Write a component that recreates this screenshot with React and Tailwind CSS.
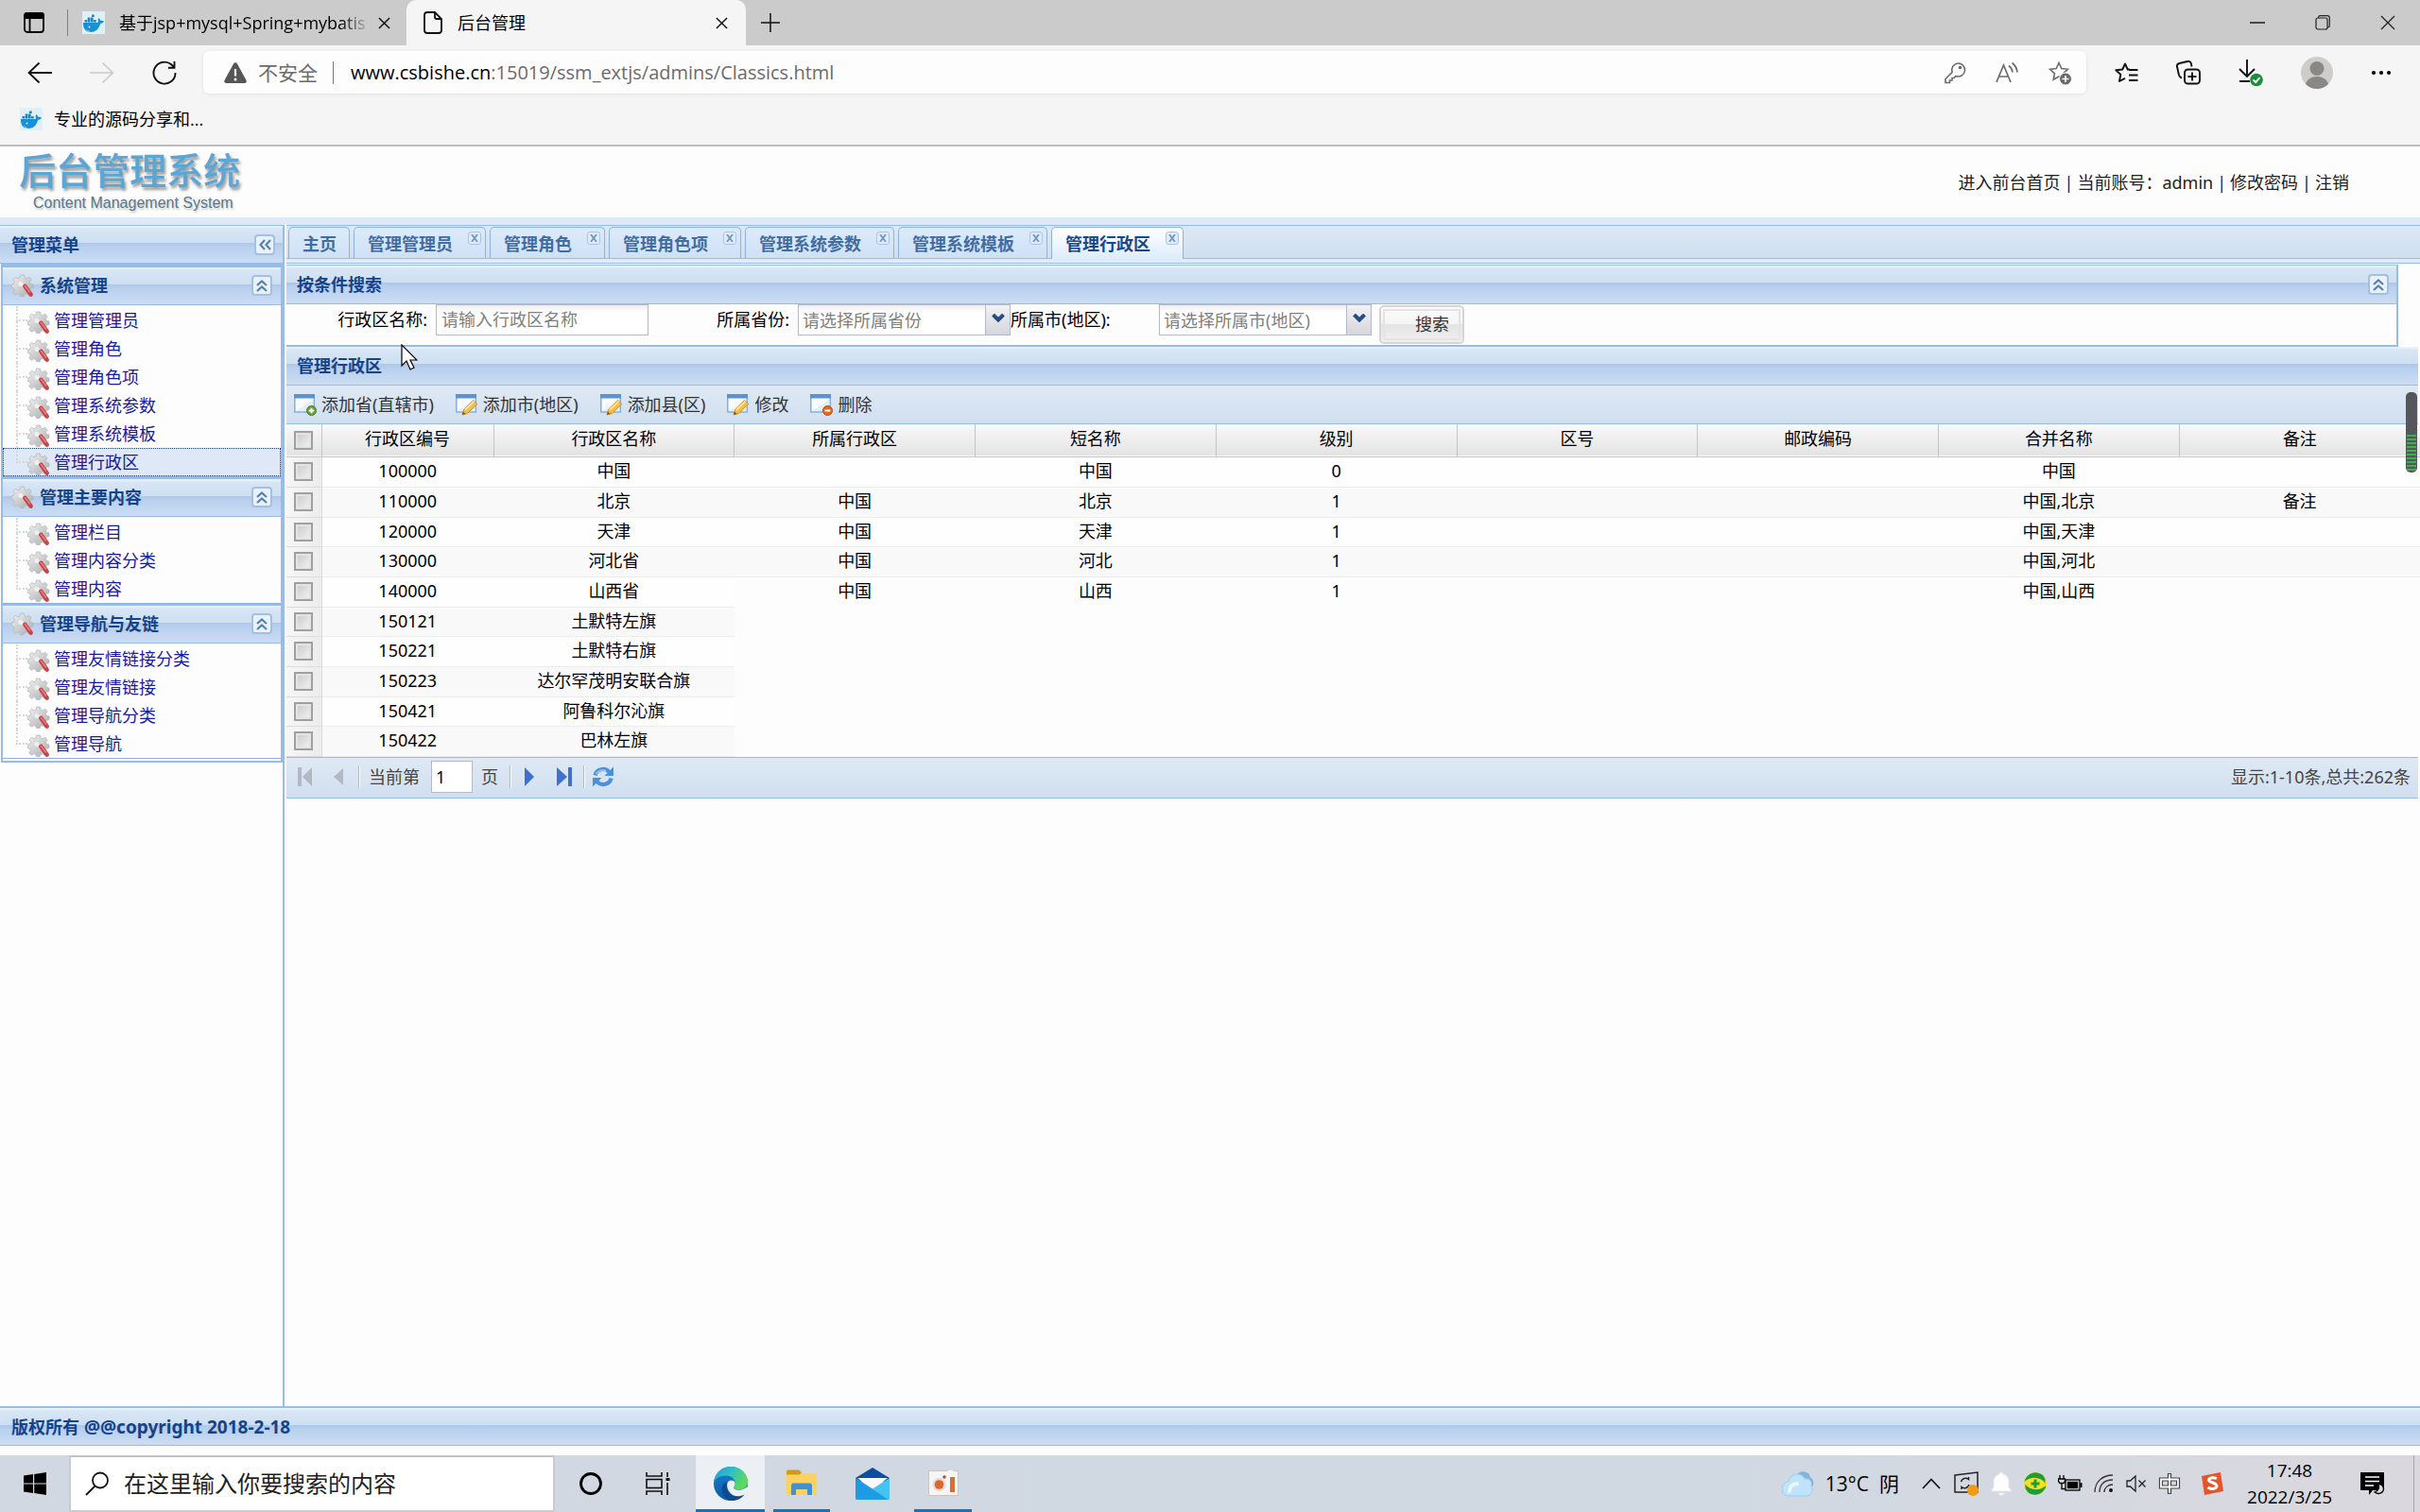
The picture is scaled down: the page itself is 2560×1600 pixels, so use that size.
import React from "react";

const font = "font-['Noto_Sans','Noto_Sans_CJK_SC',sans-serif]";
const segoe = "font-['Open_Sans','Noto_Sans_CJK_SC',sans-serif]";
const headerBg = "bg-[linear-gradient(to_bottom,#f0f6fc_0%,#d8e6f6_8%,#cddff1_45%,#abc7ec_46%,#b8cfee_56%,#cbddf3_100%)]";
const barBg = "bg-[linear-gradient(to_bottom,#dfe9f5,#d0dfef)]";

/* ---------- small drawings ---------- */

function Whale({ className }) {
  return (
    <svg viewBox="0 0 24 24" className={className} aria-hidden="true">
      <rect width="24" height="24" fill="#dff1f8" />
      <path fill="#1690d8" d="M1 12h15.500c.6-1.200.5-2.600 0-3.600l1-1.400c1 .8 1.500 1.800 1.600 2.800 1.400-.2 2.700-.1 3.800.7-.6 1.600-2 2.300-3.700 2.300C17.800 18.500 14.500 22 9 22 3.600 22 .7 18.300 1 12z" />
      <path fill="#1c84c4" d="M2.500 9h2.700v2.500H2.500zM5.700 9h2.700v2.500H5.700zM8.900 9h2.700v2.500H8.900zM12 9h2.700v2.500H12zM5.700 6.500h2.700V9H5.700zM8.900 6.500h2.700V9H8.900zM10 3.500h2.700V6H10z" />
      <path fill="#dff1f8" d="M4 18.500c1.500 1.800 3 2.500 5 2.800-2.300.7-4.200-.9-5-2.800z" />
      <circle cx="7.500" cy="16.500" r=".9" fill="#fff" />
    </svg>
  );
}

function Gear({ className }) {
  return (
    <svg viewBox="0 0 24 24" className={className} aria-hidden="true">
      <defs>
        <linearGradient id="gearFill" x1="0" y1="0" x2="1" y2="1">
          <stop offset="0" stopColor="#f2f2f2" />
          <stop offset="1" stopColor="#a9abad" />
        </linearGradient>
      </defs>
      <path
        fill="url(#gearFill)"
        stroke="#b0b3b6"
        strokeWidth=".7"
        d="M9.500 1h4l.6 3 2 .8 2.600-1.600 2.400 2.600-1.600 2.500.7 2 2.800.7v3.500l-2.800.7-.8 2 1.600 2.500-2.600 2.500-2.500-1.600-2 .8-.7 2.100H9.500l-.7-2.100-2-.8-2.500 1.600-2.600-2.500 1.600-2.500-.8-2L.2 14.500V11l2.500-.7.8-2L2 5.800l2.500-2.600L7 4.800l2-.8z"
      />
      <circle cx="10" cy="10.500" r="2.600" fill="#fafafa" opacity=".7" />
      <path d="M14.500 13l6 8.500" stroke="#c9434a" strokeWidth="4.600" strokeLinecap="round" />
      <path d="M14.500 12.500l5 6.500" stroke="#ea8083" strokeWidth="1.400" strokeLinecap="round" />
    </svg>
  );
}

function WindowIcon({ kind }) {
  return (
    <svg viewBox="0 0 24 24" className="size-6 shrink-0" aria-hidden="true">
      <rect x=".8" y="2" width="20.500" height="18" fill="#f8fbff" stroke="#86aedb" strokeWidth="1.500" />
      <rect x="0" y="1" width="22" height="4.500" fill="#5a93cf" />
      <path d="M2 19L20 7v12z" fill="#e3eefb" />
      {kind === "add" && (
        <>
          <circle cx="18.500" cy="18.500" r="5" fill="#6a9c3d" stroke="#4c7c28" />
          <path d="M18.500 15.700v5.600M15.700 18.500h5.600" stroke="#fff" strokeWidth="1.800" />
        </>
      )}
      {kind === "edit" && (
        <>
          <path d="M7 23l1.500-5.500L18.500 7.500l4.300 4L12.500 21.500z" fill="#f3bf47" stroke="#c38a22" strokeWidth=".9" />
          <path d="M10 17.500L19.500 8.500" stroke="#fde49a" strokeWidth="1.800" />
          <path d="M7 23l1-3.500 2.500 2.400z" fill="#7a5a30" />
        </>
      )}
      {kind === "del" && (
        <>
          <circle cx="18.500" cy="18.500" r="5" fill="#e06a1e" stroke="#b84c10" />
          <path d="M15.600 18.500h5.800" stroke="#fff" strokeWidth="2" />
        </>
      )}
    </svg>
  );
}

function ToolButton({ label, left }) {
  return (
    <button aria-label={label} className="flex size-[22px] shrink-0 items-center justify-center rounded-[4px] border-2 border-[#a3c0e2] bg-[#e9f2fc]">
      <svg viewBox="0 0 16 16" className={left ? "size-4 -rotate-90" : "size-4"} fill="none" stroke="#5581b0" strokeWidth="2.200" aria-hidden="true">
        <path d="M3 8l5-4.500L13 8M3 14l5-4.500L13 14" />
      </svg>
    </button>
  );
}

/* ---------- browser chrome ---------- */

function CloseX({ className }) {
  return (
    <svg viewBox="0 0 14 14" className={className} fill="none" stroke="#111" strokeWidth="1.600" aria-hidden="true">
      <path d="M1 1l12 12M13 1L1 13" />
    </svg>
  );
}

function TitleBar() {
  return (
    <div className={`flex h-12 bg-[#cbcbcb] text-[18px] leading-6 text-black ${segoe}`}>
      <button aria-label="标签操作菜单" className="flex w-[71px] items-center justify-center">
        <svg viewBox="0 0 22 22" className="size-[22px]" fill="none" stroke="#000" strokeWidth="1.800" aria-hidden="true">
          <rect x="1" y="1" width="20" height="20" rx="3" />
          <path d="M1 3a2 2 0 0 1 2-2h16a2 2 0 0 1 2 2v3H1z" fill="#000" />
          <path d="M6.500 6v15" />
        </svg>
      </button>
      <div className="my-2.5 w-px bg-[#808080]" />
      <div className="flex w-[358px] items-center pl-[15px] pr-[17px]">
        <Whale className="size-6" />
        <span className="ml-[15px] flex-1 whitespace-nowrap [mask-image:linear-gradient(to_right,#000_88%,transparent)]">基于jsp+mysql+Spring+mybatis</span>
        <button aria-label="关闭标签页" className="ml-2"><CloseX className="size-[13px]" /></button>
      </div>
      <div className="flex w-[359px] items-center rounded-t-[10px] bg-[#f5f5f5] pl-[18px] pr-[19px]">
        <svg viewBox="0 0 20 24" className="h-6 w-5" fill="none" stroke="#111" strokeWidth="1.800" aria-hidden="true">
          <path d="M12 1H4a3 3 0 0 0-3 3v16a3 3 0 0 0 3 3h12a3 3 0 0 0 3-3V8zM12 1v5a2 2 0 0 0 2 2h5" />
        </svg>
        <span className="ml-4 flex-1">后台管理</span>
        <button aria-label="关闭标签页"><CloseX className="size-[13px]" /></button>
      </div>
      <button aria-label="新建标签页" className="ml-4">
        <svg viewBox="0 0 20 20" className="size-5" stroke="#111" strokeWidth="1.500" aria-hidden="true"><path d="M10 0v20M0 10h20" /></svg>
      </button>
      <div className="ml-auto flex items-center gap-[53px] pr-[26px]">
        <button aria-label="最小化">
          <svg viewBox="0 0 16 16" className="size-4" stroke="#000" strokeWidth="1.300" aria-hidden="true"><path d="M0 8h16" /></svg>
        </button>
        <button aria-label="还原">
          <svg viewBox="0 0 16 16" className="size-4" fill="none" stroke="#222" strokeWidth="1.200" aria-hidden="true">
            <rect x="1" y="3" width="12" height="12" rx="2" />
            <path d="M3.500 3V2.500a2 2 0 0 1 2-1.800H13a2.300 2.300 0 0 1 2.300 2.300v8a2 2 0 0 1-1.900 2" />
          </svg>
        </button>
        <button aria-label="关闭">
          <svg viewBox="0 0 16 16" className="size-4" stroke="#222" strokeWidth="1.300" aria-hidden="true"><path d="M1 1l14 14M15 1L1 15" /></svg>
        </button>
      </div>
    </div>
  );
}

const starPath = "M12 2.500l2.800 6 6.600.8-4.900 4.500 1.300 6.500L12 17l-5.800 3.300 1.300-6.500L2.600 9.300l6.600-.8z";

function AddressRow() {
  return (
    <div className={`flex h-[57px] items-center bg-[#f5f5f5] ${segoe}`}>
      <button aria-label="后退" className="ml-[29px]">
        <svg viewBox="0 0 26 24" className="h-6 w-[26px]" fill="none" stroke="#111" strokeWidth="1.800" aria-hidden="true"><path d="M26 12H2M12.500 1.500L1.500 12l11 10.500" /></svg>
      </button>
      <button aria-label="前进" className="ml-10">
        <svg viewBox="0 0 26 24" className="h-6 w-[26px]" fill="none" stroke="#c9c9c9" strokeWidth="1.600" aria-hidden="true"><path d="M0 12h24M13.500 1.500l11 10.500-11 10.500" /></svg>
      </button>
      <button aria-label="刷新" className="ml-10">
        <svg viewBox="0 0 26 26" className="size-[26px]" fill="none" stroke="#111" strokeWidth="1.900" aria-hidden="true"><path d="M24.500 13A11.500 11.500 0 1 1 20 4l3.500 3.500M23.500 1v6.700H17" /></svg>
      </button>
      <div className="ml-7 flex h-[45px] flex-1 items-center rounded-[6px] bg-[#fdfdfd] pl-[22px] pr-[15px] text-[20px] leading-7 text-[#6b6b6b] shadow-[0_1px_4px_rgba(0,0,0,0.08)]">
        <svg viewBox="0 0 24 22" className="h-[22px] w-6" aria-hidden="true">
          <path d="M10 1.500a2.300 2.300 0 0 1 4 0L23.500 19a2 2 0 0 1-1.700 3H2.200a2 2 0 0 1-1.700-3z" fill="#555" />
          <path d="M12 7v7.500" stroke="#fff" strokeWidth="2.200" /><circle cx="12" cy="18" r="1.500" fill="#fff" />
        </svg>
        <span className="ml-3 text-[21px]">不安全</span>
        <div className="ml-4 h-6 w-px bg-[#777]" />
        <span className="ml-[18px] flex-1"><span className="text-black">www.csbishe.cn</span>:15019/ssm_extjs/admins/Classics.html</span>
        <div className="flex items-center gap-[31px]">
          <svg viewBox="0 0 24 24" className="size-6" fill="none" stroke="#6b6b6b" strokeWidth="1.600" aria-hidden="true">
            <path d="M15 2a7 7 0 1 1-2 13.500L11 17.500H9V20H6.500v2.500H2v-4l7-7A7.200 7.200 0 0 1 15 2z" /><circle cx="17.500" cy="6.500" r="1" fill="#6b6b6b" />
          </svg>
          <svg viewBox="0 0 24 24" className="size-6" fill="none" stroke="#6b6b6b" strokeWidth="1.700" aria-hidden="true">
            <path d="M1 22L8.500 4 16 22M3.500 16h10M14 4.500q3.500 2.500 4 7M17.500 1.500q5 4 5.500 10" />
          </svg>
          <svg viewBox="0 0 26 26" className="size-[26px]" fill="none" stroke="#6b6b6b" strokeWidth="1.600" aria-hidden="true">
            <path d={starPath} /><circle cx="19" cy="19.500" r="6.500" fill="#6b6b6b" stroke="#fff" strokeWidth="1" />
            <path d="M19 16v7M15.500 19.500h7" stroke="#fff" />
          </svg>
        </div>
      </div>
      <div className="ml-[29px] flex items-center gap-10 pr-[30px]">
        <button aria-label="收藏夹">
          <svg viewBox="0 0 26 24" className="h-6 w-[26px]" fill="none" stroke="#111" strokeWidth="1.900" strokeLinejoin="round" aria-hidden="true">
            <path d="M17 8.500h-2.200L12 2.500 9.300 8.500l-7 .8 5 4.500L6 21l6-3.200M16 9h9.500M16 14.500h9.500M16 20h9.500" />
          </svg>
        </button>
        <button aria-label="集锦">
          <svg viewBox="0 0 26 26" className="size-[26px]" fill="none" stroke="#111" strokeWidth="1.900" aria-hidden="true">
            <rect x="9" y="9.500" width="16" height="15" rx="3.500" /><path d="M17 12.500v9M12.500 17h9M6 18.500C4 18 3.500 17 3 15.500L1 6.500C.6 4.500 1.500 3.500 3.500 3L12 1c2-.4 3.500.5 4 2.500l.5 3" />
          </svg>
        </button>
        <button aria-label="下载">
          <svg viewBox="0 0 26 28" className="h-7 w-[26px]" fill="none" stroke="#111" strokeWidth="1.900" aria-hidden="true">
            <path d="M9 0v17M1 10l8 8 8-8M1 23h11" /><circle cx="19" cy="21.500" r="6.800" fill="#1d8a3c" stroke="none" /><path d="M15.500 21.500l2.700 2.700 4.300-5" stroke="#fff" />
          </svg>
        </button>
        <button aria-label="用户">
          <svg viewBox="0 0 34 34" className="size-[34px]" aria-hidden="true">
            <circle cx="17" cy="17" r="17" fill="#cfcdca" /><circle cx="17" cy="12.500" r="7.500" fill="#8a8886" />
            <path d="M5 29c1.500-5 6-8 12-8s10.500 3 12 8A17 17 0 0 1 17 34 17 17 0 0 1 5 29z" fill="#8a8886" />
          </svg>
        </button>
        <button aria-label="设置及其他">
          <svg viewBox="0 0 22 6" className="h-1.5 w-[22px]" aria-hidden="true"><circle cx="3" cy="3" r="2.100" /><circle cx="11" cy="3" r="2.100" /><circle cx="19" cy="3" r="2.100" /></svg>
        </button>
      </div>
    </div>
  );
}

/* ---------- page ---------- */

const menus = [
  { title: "系统管理", items: ["管理管理员", "管理角色", "管理角色项", "管理系统参数", "管理系统模板", "管理行政区"], active: 5 },
  { title: "管理主要内容", items: ["管理栏目", "管理内容分类", "管理内容"] },
  { title: "管理导航与友链", items: ["管理友情链接分类", "管理友情链接", "管理导航分类", "管理导航"] },
];

function MenuGroup({ group }) {
  return (
    <section className="border-b border-[#8db2e3]">
      <div className={`flex h-[42px] items-center border-b border-t-2 border-[#99bbe8] pb-0.5 pl-[9px] pr-[9px] ${headerBg}`}>
        <Gear className="size-6" />
        <h2 className="ml-1.5 flex-1 font-bold text-[#15428b]">{group.title}</h2>
        <ToolButton label="折叠" />
      </div>
      <ul className="pt-px">
        {group.items.map((t, i) => {
          const last = i === group.items.length - 1;
          return (
            <li key={t} className={i === group.active ? "flex h-[30px] outline-1 -outline-offset-1 outline-dotted outline-[#1b3a6b] bg-[#dfe8f6]" : "flex h-[30px]"}>
              <div className="ml-[14px] flex w-3 flex-col">
                <div className="h-4 border-b-2 border-l-2 border-dotted border-[#d8d8d8]" />
                <div className={last ? "flex-1" : "flex-1 border-l-2 border-dotted border-[#d8d8d8]"} />
              </div>
              <Gear className="mt-[5px] size-6" />
              <a href="#" className="ml-1 leading-[30px] text-[#1a1a9c]">{t}</a>
            </li>
          );
        })}
      </ul>
    </section>
  );
}

const tabs = ["主页", "管理管理员", "管理角色", "管理角色项", "管理系统参数", "管理系统模板", "管理行政区"];

function TabStrip() {
  return (
    <div className="border-y border-[#99bbe8] bg-[linear-gradient(to_bottom,#dce8f5,#cddef0)]">
      <div className="flex h-[35px] items-end gap-1 border-b border-[#99bbe8] pl-0.5" role="tablist">
        {tabs.map((t, i) => {
          const on = i === tabs.length - 1;
          return (
            <div
              key={t}
              className={
                on
                  ? "-mb-px flex h-[34px] items-start rounded-t-[5px] border border-b-0 border-[#8db2e3] bg-[linear-gradient(to_bottom,#ffffff,#deecfd)] pl-[14px] pr-1"
                  : "flex h-[33px] items-start rounded-t-[5px] border border-b-0 border-[#8db2e3] bg-[linear-gradient(to_bottom,#dcebfb,#cfe1f7)] pl-[14px] pr-1"
              }
            >
              <button role="tab" aria-selected={on} className={on ? "font-bold leading-[34px] text-[#15498b]" : "font-bold leading-[34px] text-[#416da3]"}>{t}</button>
              {i > 0 ? (
                <button aria-label="关闭" className="ml-4 mt-1 flex size-[14px] items-center justify-center rounded-[3px] border border-[#a9c5e6] bg-[#dfebf9]">
                  <svg viewBox="0 0 8 8" className="size-2" stroke="#6f97c4" strokeWidth="1.800" aria-hidden="true"><path d="M1 0l6 8M7 0L1 8" /></svg>
                </button>
              ) : (
                <span className="w-[9px]" />
              )}
            </div>
          );
        })}
      </div>
      <div className="h-1 bg-[#deecfd]" />
    </div>
  );
}

function Combo({ id, text }) {
  return (
    <div className="relative h-[33px] w-[225px]">
      <select id={id} className="size-full appearance-none rounded-none border border-[#b5b8c8] bg-[linear-gradient(to_bottom,#eeeeee,#ffffff_25%)] pl-1 text-[#808080]">
        <option>{text}</option>
      </select>
      <div className="pointer-events-none absolute inset-y-0 right-0 flex w-[27px] items-center justify-center border border-[#b5b8c8] bg-[linear-gradient(to_bottom,#f2f2f4,#d5d6db)] pb-1">
        <svg viewBox="0 0 14 9" className="h-[9px] w-[14px]" fill="none" stroke="#274b85" strokeWidth="4" aria-hidden="true"><path d="M1.500 1L7 6.500 12.500 1" /></svg>
      </div>
    </div>
  );
}

const cols = ["行政区编号", "行政区名称", "所属行政区", "短名称", "级别", "区号", "邮政编码", "合并名称", "备注"];
const rows = [
  ["100000", "中国", "", "中国", "0", "", "", "中国", ""],
  ["110000", "北京", "中国", "北京", "1", "", "", "中国,北京", "备注"],
  ["120000", "天津", "中国", "天津", "1", "", "", "中国,天津", ""],
  ["130000", "河北省", "中国", "河北", "1", "", "", "中国,河北", ""],
  ["140000", "山西省", "中国", "山西", "1", "", "", "中国,山西", ""],
  ["150121", "土默特左旗"],
  ["150221", "土默特右旗"],
  ["150223", "达尔罕茂明安联合旗"],
  ["150421", "阿鲁科尔沁旗"],
  ["150422", "巴林左旗"],
];
const actions = [
  ["添加省(直辖市)", "add"],
  ["添加市(地区)", "edit"],
  ["添加县(区)", "edit"],
  ["修改", "edit"],
  ["删除", "del"],
];
const check = "block size-5 appearance-none border-2 border-[#a0a0a0] bg-[linear-gradient(135deg,#c8c8c8,#f4f4f4)] outline-2 -outline-offset-4 outline-[#e4e4e4]";

function Grid() {
  return (
    <table className="w-full table-fixed border-collapse text-center">
      <colgroup>
        <col className="w-[37px]" />
        <col className="w-[182px]" />
        {cols.slice(1).map((c) => <col key={c} />)}
      </colgroup>
      <thead>
        <tr className="h-[34px] border-b border-[#c5c5c5] bg-[linear-gradient(to_bottom,#f9f9f9,#e4e3e4)]">
          <th className="border-r border-[#c5c5c5] p-0 pl-2"><input type="checkbox" aria-label="全选" className={check} /></th>
          {cols.map((c) => (
            <th key={c} scope="col" className="border-r border-[#c5c5c5] p-0 pb-1 font-normal leading-7 last:border-r-0">{c}</th>
          ))}
        </tr>
      </thead>
      <tbody>
        {rows.map((r, i) => {
          const tone = i % 2 ? "bg-[#f9f9f9]" : "bg-[#fefefe]";
          return (
            <tr key={r[0]} className={i % 3 === 2 ? "h-[31px]" : "h-8"}>
              <td className="border-b border-r border-[#dcdcdc] bg-[linear-gradient(to_right,#f6f6f6,#ececec)] p-0 pl-2">
                <input type="checkbox" aria-label={r[1]} className={check} />
              </td>
              {r.map((v, j) => (
                <td key={j} className={i === 4 && j > 1 ? "p-0 pb-0.5 leading-7" : `border-b border-[#ededed] p-0 pb-0.5 leading-7 ${tone}`}>{v}</td>
              ))}
              {r.length < 9 && <td colSpan={7} />}
            </tr>
          );
        })}
      </tbody>
    </table>
  );
}

function Sep() {
  return <span className="h-6 w-0.5 border-l border-r border-l-[#98c0e8] border-r-white" />;
}

function Pager() {
  return (
    <div className={`mr-0.5 flex h-[44px] items-center border-y border-[#99bbe8] pb-px pl-3 pr-2 text-[#444] ${barBg}`}>
      <button aria-label="首页"><svg viewBox="0 0 16 20" className="h-5 w-4" fill="#b3b9c2" aria-hidden="true"><path d="M0 0h4v20H0zM15 0v20L5 10z" /></svg></button>
      <button aria-label="上一页" className="ml-[22px]"><svg viewBox="0 0 10 20" className="h-5 w-2.5" fill="#b3b9c2" aria-hidden="true"><path d="M10 1v18L0 10z" /></svg></button>
      <div className="ml-4 flex items-center"><Sep /></div>
      <label htmlFor="page" className="ml-[9px]">当前第</label>
      <input id="page" defaultValue="1" className="ml-3 h-[34px] w-[44px] border border-[#b5b8c8] bg-white pl-1 text-black" />
      <span className="ml-[9px]">页</span>
      <div className="ml-3 flex items-center"><Sep /></div>
      <button aria-label="下一页" className="ml-[14px]"><svg viewBox="0 0 10 20" className="h-5 w-2.5" fill="#3f6fd0" aria-hidden="true"><path d="M0 0v20l10-10z" /></svg></button>
      <button aria-label="末页" className="ml-6"><svg viewBox="0 0 16 20" className="h-5 w-4" fill="#3f6fd0" aria-hidden="true"><path d="M12 0h4v20h-4zM0 0v20l11-10z" /></svg></button>
      <div className="ml-3 flex items-center"><Sep /></div>
      <button aria-label="刷新" className="ml-[7px]">
        <svg viewBox="0 0 24 22" className="h-[22px] w-6" fill="none" stroke="#4a90dc" strokeWidth="4.200" aria-hidden="true">
          <path d="M3.500 9.500A8.500 8 0 0 1 18.500 6" /><path d="M20.500 12.500A8.500 8 0 0 1 5.500 16" />
          <path d="M23 .5v9.500H13.500z" fill="#4a90dc" stroke="none" /><path d="M1 21.500V12h9.500z" fill="#4a90dc" stroke="none" />
          <path d="M4.500 8A8 7 0 0 1 15 4.500" stroke="#a9d4fb" strokeWidth="1.400" />
        </svg>
      </button>
      <span className="ml-auto">显示:1-10条,总共:262条</span>
    </div>
  );
}

function MainPanel() {
  return (
    <main className="min-w-0 flex-1">
      <TabStrip />
      <section className="mr-[23px] mt-px border-b-2 border-r-2 border-t border-[#99bbe8]">
        <div className={`flex h-[41px] items-center border-b border-[#99bbe8] pb-px pl-[11px] pr-2 ${headerBg}`}>
          <h2 className="flex-1 font-bold text-[#15428b]">按条件搜索</h2>
          <ToolButton label="折叠" />
        </div>
        <form className="flex h-[43px] items-start leading-[33px]" onSubmit={(e) => e.preventDefault()}>
          <label htmlFor="name" className="w-[158px] pr-[9px] text-right">行政区名称:</label>
          <input id="name" placeholder="请输入行政区名称" className="h-[33px] w-[225px] border border-[#b5b8c8] bg-[linear-gradient(to_bottom,#eeeeee,#ffffff_25%)] pl-[5px] placeholder:text-[#808080]" />
          <label htmlFor="prov" className="w-[158px] pr-[9px] text-right">所属省份:</label>
          <Combo id="prov" text="请选择所属省份" />
          <label htmlFor="city" className="w-[157px]">所属市(地区):</label>
          <Combo id="city" text="请选择所属市(地区)" />
          <button className="ml-2 mt-px h-[41px] w-[90px] rounded-[5px] border-2 border-[#d5d5d5] bg-[linear-gradient(to_bottom,#fafafa_0%,#f5f5f5_49%,#e4e4e4_50%,#f0f0f0_100%)] pr-3.5 text-right text-[#333] outline-2 -outline-offset-6 outline-[#e3e3e3]">搜索</button>
        </form>
      </section>
      <section>
        <div className={`mr-0.5 flex h-[41px] items-center border-b border-[#99bbe8] pl-[11px] ${headerBg}`}>
          <h2 className="font-bold text-[#15428b]">管理行政区</h2>
        </div>
        <div className={`mr-0.5 flex h-[41px] items-center gap-[23px] border-b border-[#99bbe8] pb-px pl-2 text-[#333] ${barBg}`}>
          {actions.map(([t, k]) => (
            <button key={t} className="flex items-center gap-[5px]"><WindowIcon kind={k} />{t}</button>
          ))}
        </div>
        <Grid />
        <Pager />
      </section>
    </main>
  );
}

/* ---------- taskbar ---------- */

function Taskbar() {
  return (
    <footer className={`flex h-[60px] bg-[linear-gradient(to_right,#d2d8e2,#d0d8e2_70%,#dad8de)] text-black ${segoe}`}>
      <button aria-label="开始" className="flex w-[73px] items-center justify-center">
        <svg viewBox="0 0 24 24" className="size-6" aria-hidden="true"><path d="M0 3.500l10-1.400v9.300H0zM11.200 1.900L24 0v11.400H11.200zM0 12.600h10v9.300L0 20.500zM11.200 12.600H24V24l-12.800-1.900z" /></svg>
      </button>
      <label className="flex w-[514px] items-center border-2 border-b-[#c9cbd0] border-l-[#c9cbd0] border-r-[#c9cbd0] border-t-[#c2c2c2] bg-white pl-[15px]">
        <svg viewBox="0 0 26 26" className="size-[26px]" fill="none" stroke="#111" strokeWidth="1.800" aria-hidden="true"><circle cx="16" cy="9.500" r="8" /><path d="M10.500 15.500L1 25" /></svg>
        <input aria-label="搜索" placeholder="在这里输入你要搜索的内容" className="ml-[15px] w-[400px] bg-transparent text-[24px] leading-9 outline-none placeholder:text-[#1f1f1f]" />
      </label>
      <button aria-label="Cortana" className="flex w-[75px] items-center justify-center">
        <svg viewBox="0 0 26 26" className="size-[26px]" aria-hidden="true"><circle cx="13" cy="13" r="10.500" fill="none" stroke="#000" strokeWidth="2.800" /></svg>
      </button>
      <button aria-label="任务视图" className="flex w-[74px] items-center justify-center pr-1.5">
        <svg viewBox="0 0 26 24" className="h-6 w-[26px]" fill="none" stroke="#111" strokeWidth="1.600" aria-hidden="true">
          <path d="M1 0v4h16V0M1 24v-4h16v4" /><rect x="1" y="7.500" width="16" height="9" /><path d="M23 0v5M23 11v13" /><path d="M21.500 7.500h4" strokeWidth="3" />
        </svg>
      </button>
      <button aria-label="Edge" className="flex w-[73px] items-center justify-center border-b-[3px] border-[#0f74c4] bg-[#eceff3]">
        <svg viewBox="0 0 36 36" className="mt-[3px] size-9" aria-hidden="true">
          <defs>
            <linearGradient id="eTop" x1="0" y1="0" x2="1" y2=".5"><stop offset="0" stopColor="#1d9ed8" /><stop offset=".5" stopColor="#2fc0c4" /><stop offset="1" stopColor="#62d957" /></linearGradient>
            <linearGradient id="eLow" x1="0" y1="0" x2="0" y2="1"><stop offset="0" stopColor="#1781d4" /><stop offset="1" stopColor="#0c59a4" /></linearGradient>
          </defs>
          <circle cx="18" cy="18" r="18" fill="url(#eLow)" />
          <path d="M0 17C1 7 9 0 18.500 0 28.500 0 36 7.500 36 16c0 5.500-4.500 8.500-9 8.500-3.500 0-6-1-6-2.500 0-1 1.500-1.500 1.500-4.500 0-4.500-4-8-9.500-8C6.500 9.500 2 12 0 17z" fill="url(#eTop)" />
          <path d="M14 19c-1.500 6 3 12.500 10 12.500 3.500 0 6.500-1 9-2.500C30 33.500 24.500 36 19 36c-6-1-10.500-6.500-10.500-12 0-4 2-6.500 5-8z" fill="#0d4a8e" />
          <path d="M14.200 18.500c.3-2.500 2.300-4 4.500-4 2.300 0 3.800 1.500 3.800 3.500 0 2.500-1.500 3-1.500 4.200 0 2 4 3 8 2.300 2.500-.4 4.700-1.700 6-3.300l1 1v4l-3 3c-2.500 1.500-5 2-8 2-6 0-11.500-6-10.800-12.700z" fill="#eceff3" />
        </svg>
      </button>
      <button aria-label="文件资源管理器" className="ml-[9px] flex w-[60px] items-center justify-center border-b-[3px] border-[#0f74c4]">
        <svg viewBox="0 0 32 27" className="h-[27px] w-8" aria-hidden="true">
          <path d="M0 2a1.500 1.500 0 0 1 1.500-1.500H13L16 4h14.500A1.500 1.500 0 0 1 32 5.500V25a1.500 1.500 0 0 1-1.500 1.500h-29A1.500 1.500 0 0 1 0 25z" fill="#fbd25f" />
          <path d="M0 2A1.500 1.500 0 0 1 1.500.5H13L16 3l-2 2.500H0z" fill="#d09a18" />
          <path d="M5 27V17a2.500 2.500 0 0 1 2.500-2.500h17A2.500 2.500 0 0 1 27 17v10h-5v-6H10v6z" fill="#3f93d3" />
        </svg>
      </button>
      <button aria-label="邮件" className="flex w-[89px] items-center justify-center">
        <svg viewBox="0 0 36 34" className="h-[34px] w-9" aria-hidden="true">
          <path d="M0 11L18 0l18 11v4H0z" fill="#0d4f9e" /><path d="M2 11h32L18 24z" fill="#f7fbff" />
          <path d="M0 11l36 23H1.500A1.500 1.500 0 0 1 0 32.500z" fill="#1e9be4" /><path d="M36 11v21.500a1.500 1.500 0 0 1-1.500 1.500L18 22.500z" fill="#45c4f3" />
        </svg>
      </button>
      <button aria-label="PPT" className="flex w-[61px] items-center justify-center border-b-[3px] border-[#0f74c4]">
        <svg viewBox="0 0 32 28" className="h-7 w-8" aria-hidden="true">
          <path d="M.5 1.500H20l2-1.500h4l1 1.500h4.500v26H.5z" fill="#f7f5f4" stroke="#c9c4c4" />
          <circle cx="11.500" cy="16" r="7" fill="#dcdcdc" /><circle cx="11.500" cy="16" r="4.800" fill="#e0652a" /><circle cx="17" cy="8" r="1.800" fill="#b5532a" />
          <rect x="23" y="8" width="5" height="16" fill="#e36b2c" />
        </svg>
      </button>
      <div className="ml-auto flex items-center gap-3">
        <svg viewBox="0 0 34 28" className="h-7 w-[34px]" aria-hidden="true">
          <path d="M15 6a8 8 0 0 1 15 1c3 2 4 5 3 9l-6 6z" fill="#86b2de" />
          <path d="M8 27a7.500 7.500 0 0 1-1-15 9 9 0 0 1 17-3c5-1 8 3 7 7 3 5 0 11-5 11z" fill="#bfe3f9" stroke="#9dcdf0" />
          <path d="M8 22c0-5 4-8 8-8" stroke="#e9f7ff" strokeWidth="4" fill="none" strokeLinecap="round" />
        </svg>
        <span className="text-[21px] leading-8">13°C&nbsp; 阴</span>
      </div>
      <div className="ml-6 flex items-center gap-[12px]">
        <svg viewBox="0 0 20 12" className="h-3 w-5" fill="none" stroke="#111" strokeWidth="1.700" aria-hidden="true"><path d="M1 11l9-9.500L19 11" /></svg>
        <svg viewBox="0 0 26 26" className="ml-0.5 size-[26px]" fill="none" stroke="#222" strokeWidth="1.500" aria-hidden="true">
          <path d="M1 4l24-3v21H1z" /><path d="M7.500 11a5 5 0 0 1 8-2.500V6M16 14a5 5 0 0 1-8 2.500V19" /><circle cx="20" cy="20" r="6" fill="#f59a14" stroke="none" />
        </svg>
        <svg viewBox="0 0 24 26" className="h-[26px] w-6" fill="#fdfdfd" stroke="#e4e6ea" strokeWidth=".8" aria-hidden="true"><path d="M12 1c1.500 0 2 1 2 2 4 1 6 4 6 8v6l3 4H1l3-4v-6c0-4 2-7 6-8 0-1 .5-2 2-2zM9 23h6c0 3-6 3-6 0z" /></svg>
        <svg viewBox="0 0 24 24" className="size-6" aria-hidden="true">
          <circle cx="12" cy="12" r="12" fill="#f5e11d" />
          <path d="M.5 10A12 12 0 0 1 20 3l2.500 4v4.500C18 5 8 3.500 .5 10z" fill="#1f9d3c" />
          <path d="M23.500 14A12 12 0 0 1 4 21l-2.500-4v-4.500C6 19 16 20.500 23.500 14z" fill="#1f9d3c" />
          <path d="M12 7.500v9M7.500 12h9" stroke="#1f9d3c" strokeWidth="3" />
        </svg>
        <svg viewBox="0 0 26 18" className="h-[18px] w-[26px]" fill="none" stroke="#000" strokeWidth="1.300" aria-hidden="true">
          <rect x="8" y="5" width="15" height="11" /><rect x="10.500" y="7.500" width="10" height="6" fill="#000" /><path d="M24.500 8v5" strokeWidth="2" /><path d="M2 0v4M6 0v4M.5 4h7v2.500L6 8.500H2L.5 6.500zM4 8.500v6h4" />
        </svg>
        <svg viewBox="0 0 22 20" className="h-5 w-[22px]" fill="none" stroke="#333" strokeWidth="1.300" aria-hidden="true">
          <path d="M1 19C1 8 9 1 20 1M6 19C6 11 11 6 20 6M11 19c0-5 4-8 9-8" /><circle cx="18" cy="17" r="2" fill="#111" stroke="none" />
        </svg>
        <svg viewBox="0 0 22 20" className="h-5 w-[22px]" fill="none" stroke="#222" strokeWidth="1.300" aria-hidden="true"><path d="M1 7v6h3.500L10 18V2L4.500 7zM13.500 6.500l7 7M20.500 6.500l-7 7" /></svg>
        <svg viewBox="0 0 24 24" className="size-6" fill="none" aria-hidden="true">
          <path d="M3 7.500h18v8H3zM12 1v22" stroke="#444" strokeWidth="4.200" /><path d="M3 7.500h18v8H3zM12 2v20" stroke="#fff" strokeWidth="1.800" />
        </svg>
        <svg viewBox="0 0 26 26" className="ml-2 size-[26px]" aria-hidden="true">
          <path d="M2 5L22 1l3 20-20 4z" fill="#e4552b" /><path d="M18 7.500c-3-1.500-8-1-8.500 1.500-.5 3 8.500 2.500 8.500 6.500 0 3-6 4-9.500 1.500" fill="none" stroke="#fff" strokeWidth="3" />
        </svg>
      </div>
      <div className="ml-6 flex flex-col items-center justify-center text-[19px] leading-7"><span>17:48</span><span>2022/3/25</span></div>
      <button aria-label="通知" className="ml-[30px] mr-[30px]">
        <svg viewBox="0 0 26 26" className="size-[26px]" aria-hidden="true">
          <path d="M0 1h25v19H13l-4 5v-5H0z" /><path d="M5 6h15M5 10.500h15M5 15h9" stroke="#fff" strokeWidth="1.500" />
          <path d="M18 13c3 3 2 7-3 9 4 3 9 1 9.500-3 .3-3-2.500-6-6.500-6z" fill="#dad8de" stroke="#000" strokeWidth="1.300" />
        </svg>
      </button>
      <div className="mr-1.5 w-px bg-[#a5a7ad]" />
    </footer>
  );
}

export default function App() {
  return (
    <div className={`relative flex min-h-screen flex-col bg-[#fdfdfd] text-[18px] leading-7 text-black ${font}`}>
      <TitleBar />
      <AddressRow />
      <div className={`flex h-[50px] items-start border-b-2 border-[#bcbcbc] bg-[#f5f5f5] pl-[21px] pt-[7px] text-[18px] ${segoe}`}>
        <a href="#" className="flex items-center gap-3 leading-7"><Whale className="size-6" />专业的源码分享和...</a>
      </div>
      <header className="flex h-[75px] justify-between pl-5 pr-[75px]">
        <div className="pt-0.5">
          <div className="text-[39px] font-medium leading-[46px] text-[#5aa6d6] [text-shadow:2px_3px_3px_rgba(90,90,90,0.6)]">后台管理系统</div>
          <div className="ml-[15px] mt-0.5 font-['Liberation_Sans',sans-serif] text-[16px] leading-5 text-[#56788f] [text-shadow:1px_2px_2px_rgba(90,90,90,0.35)]">Content Management System</div>
        </div>
        <nav className="flex items-center gap-1 text-[#222]">
          <a href="#">进入前台首页</a>|<span>当前账号：admin</span>|<a href="#">修改密码</a>|<a href="#">注销</a>
        </nav>
      </header>
      <div className="h-2 bg-[#dfe8f6]" />
      <div className="flex flex-1">
        <aside className="w-[301px] shrink-0 border-r-2 border-t border-[#99bbe8]">
          <div className={`flex h-10 items-center border-b border-[#99bbe8] pl-3 pr-2 ${headerBg}`}>
            <h1 className="flex-1 font-bold text-[#15428b]">管理菜单</h1>
            <ToolButton label="收起菜单" left />
          </div>
          <div className="ml-px border-2 border-[#99bbe8] pb-0.5">
            {menus.map((m) => <MenuGroup key={m.title} group={m} />)}
          </div>
        </aside>
        <div className="w-0.5" />
        <MainPanel />
      </div>
      <div className="border-t-2 border-[#99bbe8]">
        <div className={`flex h-10 items-center gap-[5px] border-b border-[#99bbe8] pl-3 font-bold text-[#15428b] ${headerBg}`}>
          <span>版权所有</span>
          <span className="text-[19px]">@@copyright 2018-2-18</span>
        </div>
        <div className="h-2.5" />
      </div>
      <Taskbar />
      <svg viewBox="0 0 18 28" className="absolute left-[424px] top-[364px] h-7 w-[18px]" aria-hidden="true">
        <path d="M1 1v22l5-5 4 9 4-2-4-8h7z" fill="#fff" stroke="#000" strokeWidth="1.200" />
      </svg>
      <div className="absolute right-[3px] top-[415px] flex h-[85px] w-3 flex-col justify-end rounded-[5px] bg-[#55575d] px-px pb-0.5">
        <div className="h-[38px] bg-[repeating-linear-gradient(to_bottom,#3fae4e_0_2px,#55575d_2px_4px)]" />
      </div>
    </div>
  );
}
